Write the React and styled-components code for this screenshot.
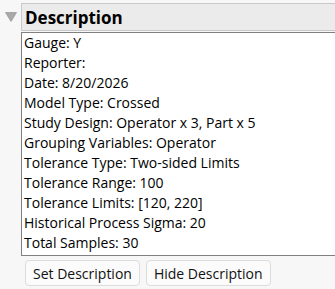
import React from "react";
import styled, { createGlobalStyle } from "styled-components";

const GlobalStyle = createGlobalStyle`
  *, *::before, *::after {
    box-sizing: border-box;
  }
  html, body {
    margin: 0;
    padding: 0;
    background: #f7f7f7;
    overflow: hidden;
  }
  body {
    font-family: "Segoe UI", "Open Sans", "Noto Sans", sans-serif;
    color: #000;
  }
`;

const Outline = styled('div')`
  display: flex;
  align-items: flex-start;
  padding-top: 3px;
`;

const Toggle = styled('button')`
  border: unset;
  background: transparent;
  padding: 0 0 0 1px;
  width: 21px;
  height: 28px;
  flex-shrink: 0;
  display: flex;
  justify-content: center;
  align-items: center;
  cursor: pointer;
  outline: unset;
`;

const Content = styled('div')`
  display: flex;
  flex-direction: column;
  width: 340px;
  flex-shrink: 0;
`;

const TitleBar = styled('div')`
  height: 28px;
  background-color: #ebebeb;
  border: 1px solid #c8c8c8;
  border-right: none;
  display: flex;
  align-items: center;
  padding-left: 3px;
  font-size: 17px;
  font-weight: bold;
  color: #000;
`;

const TextBox = styled('div')`
  margin-top: 1px;
  background-color: #fff;
  border: 1px solid #808080;
  border-right: none;
  padding: 0 2px;
  font-size: 14px;
  line-height: 20px;
  height: 224px;
`;

const Line = styled('div')`
  white-space: nowrap;
`;

const ButtonsRow = styled('div')`
  display: flex;
  gap: 6px;
  padding: 4px 0 0 4px;
`;

const Button = styled('button')`
  font-family: inherit;
  font-size: 14px;
  color: #111;
  background-color: #fbfbfb;
  border: 1px solid #dcdcdc;
  border-radius: 4px;
  height: 26px;
  padding: 0 7px;
  cursor: pointer;
  outline: unset;
`;

const lines = [
  "Gauge: Y",
  "Reporter:",
  "Date: 8/20/2026",
  "Model Type: Crossed",
  "Study Design: Operator x 3, Part x 5",
  "Grouping Variables: Operator",
  "Tolerance Type: Two-sided Limits",
  "Tolerance Range: 100",
  "Tolerance Limits: [120, 220]",
  "Historical Process Sigma: 20",
  "Total Samples: 30",
];

const App = () => (
  <>
    <GlobalStyle />
    <Outline>
      <Toggle>
        <svg width="12" height="10" viewBox="0 0 12 10">
          <path d="M0.5 0.5 L11.5 0.5 L6 9.5 Z" fill="#a9a9a9" stroke="#9c9c9c" strokeWidth="0.8" />
        </svg>
      </Toggle>
      <Content>
        <TitleBar>Description</TitleBar>
        <TextBox>
          {lines.map((l) => (
            <Line key={l}>{l}</Line>
          ))}
        </TextBox>
        <ButtonsRow>
          <Button>Set Description</Button>
          <Button>Hide Description</Button>
        </ButtonsRow>
      </Content>
    </Outline>
  </>
);

export default App;
